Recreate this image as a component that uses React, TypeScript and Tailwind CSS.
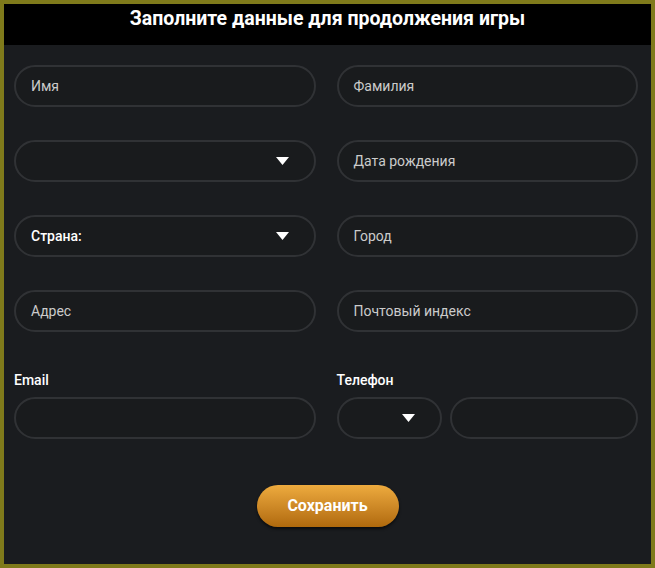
import React from 'react'

const font = { fontFamily: 'Roboto, "Liberation Sans", sans-serif' }

function Caret() {
  return (
    <svg width="13" height="8" viewBox="0 0 13 8" className="shrink-0">
      <path d="M0 0 H13 L6.5 8 Z" fill="#ffffff" />
    </svg>
  )
}

function Field({ placeholder, children, select }: { placeholder?: string; children?: React.ReactNode; select?: boolean }) {
  return (
    <div className="flex h-[42px] items-center justify-between rounded-full border-2 border-[#303235] bg-[#191b1d] pl-[15px] pr-[25px]">
      {placeholder ? <span className="text-[14px] text-[#cbcbcb]">{placeholder}</span> : <span>{children}</span>}
      {select && <Caret />}
    </div>
  )
}

export default function App() {
  return (
    <div className="h-[568px] w-[655px] bg-[#7f7a1b] p-[4px]" style={font}>
      <div className="flex h-full flex-col bg-[#1a1c1f]">
        {/* шапка */}
        <div className="flex h-[41px] items-start justify-center bg-black">
          <h1 className="text-[19.5px] font-bold text-white">Заполните данные для продолжения игры</h1>
        </div>

        <div className="grid grid-cols-2 gap-x-[21px] gap-y-[33px] pl-[10px] pr-[13px] pt-[20px]">
          <Field placeholder="Имя" />
          <Field placeholder="Фамилия" />
          <Field select />
          <Field placeholder="Дата рождения" />
          <Field select>
            <span className="text-[14px] font-medium text-white">Страна:</span>
          </Field>
          <Field placeholder="Город" />
          <Field placeholder="Адрес" />
          <Field placeholder="Почтовый индекс" />
        </div>

        <div className="mt-[38px] grid grid-cols-2 gap-x-[21px] pl-[10px] pr-[13px]">
          <div className="flex flex-col gap-[6px]">
            <span className="text-[14px] font-medium text-white">Email</span>
            <Field />
          </div>
          <div className="flex flex-col gap-[6px]">
            <span className="text-[14px] font-medium text-white">Телефон</span>
            <div className="flex gap-[8px]">
              <div className="w-[105px]">
                <Field select />
              </div>
              <div className="flex-1">
                <Field />
              </div>
            </div>
          </div>
        </div>

        <div className="mt-[46px] flex justify-center">
          <button className="h-[42px] w-[142px] rounded-full bg-gradient-to-b from-[#eeab3e] to-[#b06a0c] text-[16px] font-bold text-white shadow-[0_2px_3px_rgba(0,0,0,0.6)]">
            Сохранить
          </button>
        </div>
      </div>
    </div>
  )
}
